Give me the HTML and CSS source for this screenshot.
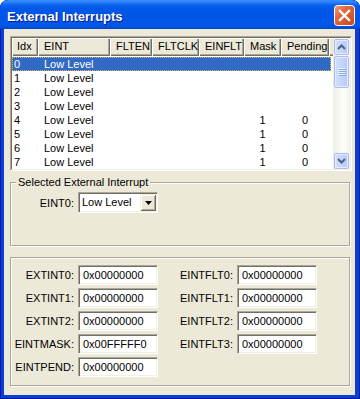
FILE: index.html
```html
<!DOCTYPE html>
<html>
<head>
<meta charset="utf-8">
<title>External Interrupts</title>
<link rel="stylesheet" href="styles.css">
</head>
<body>
<div class="window">
  <div class="titlebar">
    <span class="title">External Interrupts</span>
    <button class="close" type="button" aria-label="Close">
      <svg width="21" height="21" viewBox="0 0 21 21">
        <defs>
          <linearGradient id="cg" x1="0" y1="0" x2="1" y2="1">
            <stop offset="0" stop-color="#F0A080"/>
            <stop offset="0.35" stop-color="#E3683C"/>
            <stop offset="1" stop-color="#C8461E"/>
          </linearGradient>
        </defs>
        <rect x="0.5" y="0.5" width="20" height="20" rx="3" fill="url(#cg)" stroke="#fff"/>
        <path d="M6 6 L15 15 M15 6 L6 15" stroke="#fff" stroke-width="2.4" stroke-linecap="square"/>
      </svg>
    </button>
  </div>
  <div class="client">
    <div class="listview">
      <div class="lv-inner">
        <div class="lv-main">
          <div class="lv-header">
            <div class="hcell first c-idx">Idx</div>
            <div class="hcell c-eint">EINT</div>
            <div class="hcell c-flten">FLTEN</div>
            <div class="hcell c-fltclk">FLTCLK</div>
            <div class="hcell c-einflt">EINFLT</div>
            <div class="hcell c-mask">Mask</div>
            <div class="hcell c-pend">Pending</div>
            <div class="hcell fill"></div>
          </div>
          <div class="lv-rows">
            <div class="row selected"><span class="cell c-idx">0</span><span class="cell c-eint">Low Level</span></div>
            <div class="row"><span class="cell c-idx">1</span><span class="cell c-eint">Low Level</span></div>
            <div class="row"><span class="cell c-idx">2</span><span class="cell c-eint">Low Level</span></div>
            <div class="row"><span class="cell c-idx">3</span><span class="cell c-eint">Low Level</span></div>
            <div class="row"><span class="cell c-idx">4</span><span class="cell c-eint">Low Level</span><span class="cell c-flten"></span><span class="cell c-fltclk"></span><span class="cell c-einflt"></span><span class="cell c-mask">1</span><span class="cell c-pend">0</span></div>
            <div class="row"><span class="cell c-idx">5</span><span class="cell c-eint">Low Level</span><span class="cell c-flten"></span><span class="cell c-fltclk"></span><span class="cell c-einflt"></span><span class="cell c-mask">1</span><span class="cell c-pend">0</span></div>
            <div class="row"><span class="cell c-idx">6</span><span class="cell c-eint">Low Level</span><span class="cell c-flten"></span><span class="cell c-fltclk"></span><span class="cell c-einflt"></span><span class="cell c-mask">1</span><span class="cell c-pend">0</span></div>
            <div class="row"><span class="cell c-idx">7</span><span class="cell c-eint">Low Level</span><span class="cell c-flten"></span><span class="cell c-fltclk"></span><span class="cell c-einflt"></span><span class="cell c-mask">1</span><span class="cell c-pend">0</span></div>
          </div>
        </div>
        <div class="vscroll">
          <div class="sb-btn">
            <svg width="9" height="6" viewBox="0 0 9 6"><polyline points="1,5 4.5,1.5 8,5" fill="none" stroke="#4D6185" stroke-width="2"/></svg>
          </div>
          <div class="sb-btn sb-thumb">
            <svg width="8" height="8" viewBox="0 0 8 8">
              <rect x="0" y="0" width="7" height="1" fill="#EEF4FE"/><rect x="1" y="1" width="7" height="1" fill="#8CA8E0"/>
              <rect x="0" y="2" width="7" height="1" fill="#EEF4FE"/><rect x="1" y="3" width="7" height="1" fill="#8CA8E0"/>
              <rect x="0" y="4" width="7" height="1" fill="#EEF4FE"/><rect x="1" y="5" width="7" height="1" fill="#8CA8E0"/>
              <rect x="0" y="6" width="7" height="1" fill="#EEF4FE"/><rect x="1" y="7" width="7" height="1" fill="#8CA8E0"/>
            </svg>
          </div>
          <div class="sb-space"></div>
          <div class="sb-btn">
            <svg width="9" height="6" viewBox="0 0 9 6"><polyline points="1,1 4.5,4.5 8,1" fill="none" stroke="#4D6185" stroke-width="2"/></svg>
          </div>
        </div>
      </div>
    </div>

    <div class="group sel-group">
      <div class="legend">Selected External Interrupt</div>
      <div class="combo-row">
        <span class="lbl">EINT0:</span>
        <div class="combo">
          <span class="combo-text">Low Level</span>
          <span class="dd"><svg width="7" height="4" viewBox="0 0 7 4"><polygon points="0,0 7,0 3.5,4" fill="#000"/></svg></span>
        </div>
      </div>
    </div>

    <div class="group regs">
      <div class="reg-grid">
        <span class="lbl">EXTINT0:</span><span class="edit">0x00000000</span>
        <span class="lbl">EINTFLT0:</span><span class="edit">0x00000000</span>
        <span class="lbl">EXTINT1:</span><span class="edit">0x00000000</span>
        <span class="lbl">EINTFLT1:</span><span class="edit">0x00000000</span>
        <span class="lbl">EXTINT2:</span><span class="edit">0x00000000</span>
        <span class="lbl">EINTFLT2:</span><span class="edit">0x00000000</span>
        <span class="lbl">EINTMASK:</span><span class="edit">0x00FFFFF0</span>
        <span class="lbl">EINTFLT3:</span><span class="edit">0x00000000</span>
        <span class="lbl">EINTPEND:</span><span class="edit">0x00000000</span>
      </div>
    </div>
  </div>
</div>
</body>
</html>
```

FILE: styles.css
```css
* { box-sizing: border-box; }

body {
  margin: 0;
  background: #fff;
  font-family: "Liberation Sans", Arial, sans-serif;
  font-size: 11px;
  color: #000;
}

.window {
  width: 360px;
  height: 399px;
  background: #0A3ED6;
  border-radius: 8px 8px 0 0;
  display: flex;
  flex-direction: column;
  overflow: hidden;
  box-shadow: inset 0 0 0 1px #001A9E;
}

.titlebar {
  height: 29px;
  flex: none;
  display: flex;
  align-items: center;
  justify-content: space-between;
  padding: 0 5px 0 7px;
  border-radius: 8px 8px 0 0;
  background: linear-gradient(to bottom,
    #3A8CFF 0px, #2E82FA 2px, #0A62EE 5px, #0057E8 9px,
    #0055E5 60%, #0058EA 85%, #0050DC 94%, #0040CF 100%);
}

.title {
  font-family: "Liberation Sans", Arial, sans-serif;
  font-weight: bold;
  font-size: 13px;
  color: #fff;
  text-shadow: 1px 1px 0 #0A1883;
  padding-top: 3px;
}

.close {
  width: 21px;
  height: 21px;
  padding: 0;
  margin-top: 2px;
  border: 0;
  background: none;
  display: block;
}
.close svg { display: block; }

.client {
  flex: 1;
  margin: 0 5px 4px 4px;
  background: #ECE9D8;
  padding: 7px 0 0 6px;
}

/* list view */
.listview {
  width: 342px;
  height: 135px;
  border: 1px solid;
  border-color: #ACA899 #fff #fff #ACA899;
}
.lv-inner {
  height: 100%;
  border: 1px solid;
  border-color: #716F64 #F1EFE2 #F1EFE2 #716F64;
  background: #fff;
  display: flex;
}
.lv-main { flex: 1; min-width: 0; }

.lv-header {
  display: flex;
  height: 18px;
  background: #ECE9D8;
}
.hcell {
  flex: none;
  height: 18px;
  line-height: 17px;
  padding-left: 6px;
  white-space: nowrap;
  overflow: hidden;
  box-shadow: inset 1px 1px 0 #fff, inset -1px -1px 0 #716F64, inset -2px -2px 0 #ACA899;
}
.hcell.first { padding-left: 5px; }
.hcell.fill { flex: 1; }

.c-idx { width: 26px; }
.c-eint { width: 72px; }
.c-flten { width: 42px; }
.c-fltclk { width: 47px; }
.c-einflt { width: 45px; }
.c-mask { width: 37px; }
.c-pend { width: 48px; }

.lv-rows { margin-top: 1px; }
.row {
  display: flex;
  height: 14px;
  line-height: 14px;
  margin-right: 2px;
}
.cell {
  flex: none;
  padding-left: 6px;
  white-space: nowrap;
}
.cell.c-idx { padding-left: 2px; }
.cell.c-mask, .cell.c-pend { padding-left: 0; text-align: center; }

.row.selected {
  background: #316AC5;
  color: #fff;
  outline: 1px dotted #E2B155;
  outline-offset: -1px;
}

/* scrollbar */
.vscroll {
  width: 17px;
  flex: none;
  display: flex;
  flex-direction: column;
  padding: 1px 1px 0 1px;
  background: linear-gradient(to right, #EEEDE5, #FDFDFA 60%, #F3F1EC);
}
.sb-btn {
  height: 16px;
  flex: none;
  border: 1px solid #A9BEEE;
  border-radius: 2px;
  background: linear-gradient(to right, #D2DFFD, #C4D5FC 50%, #B5C9F7);
  box-shadow: inset 0 0 0 1px #E4ECFE;
  display: flex;
  align-items: center;
  justify-content: center;
}
.sb-btn svg { display: block; }
.sb-thumb {
  height: 32px;
  margin-top: 1px;
}
.sb-space { flex: 1; }

/* group boxes */
.group {
  width: 340px;
  border: 1px solid #ACA899;
  box-shadow: inset 1px 1px 0 #fff, 1px 1px 0 #fff;
}
.sel-group {
  margin-top: 11px;
  height: 64px;
}
.legend {
  width: fit-content;
  margin: -7px 0 0 5px;
  padding: 0 2px;
  line-height: 13px;
  background: #ECE9D8;
}

.combo-row {
  display: flex;
  align-items: center;
  gap: 4px;
  margin-top: 3px;
}
.lbl {
  width: 63px;
  text-align: right;
  white-space: nowrap;
}
.combo {
  width: 80px;
  height: 21px;
  display: flex;
  padding: 1px;
  border: 1px solid;
  border-color: #ACA899 #fff #fff #ACA899;
  box-shadow: inset 1px 1px 0 #716F64, inset -1px -1px 0 #F1EFE2;
  background: #fff;
}
.combo-text {
  flex: 1;
  padding-left: 2px;
  line-height: 17px;
}
.dd {
  width: 16px;
  height: 17px;
  background: #ECE9D8;
  box-shadow: inset 1px 1px 0 #F1EFE2, inset -1px -1px 0 #716F64, inset 2px 2px 0 #fff, inset -2px -2px 0 #ACA899;
  display: flex;
  align-items: center;
  justify-content: center;
}
.dd svg { display: block; }

.regs {
  margin-top: 11px;
  height: 129px;
  padding-top: 7px;
}
.reg-grid {
  display: grid;
  grid-template-columns: 63px 80px 71px 80px;
  grid-auto-rows: 20px;
  column-gap: 4px;
  row-gap: 3px;
  align-items: center;
}
.reg-grid .lbl { width: auto; }
.edit {
  height: 20px;
  border: 1px solid;
  border-color: #ACA899 #fff #fff #ACA899;
  box-shadow: inset 1px 1px 0 #716F64, inset -1px -1px 0 #F1EFE2;
  background: #fff;
  padding-left: 4px;
  line-height: 18px;
  white-space: nowrap;
  overflow: hidden;
}
```
